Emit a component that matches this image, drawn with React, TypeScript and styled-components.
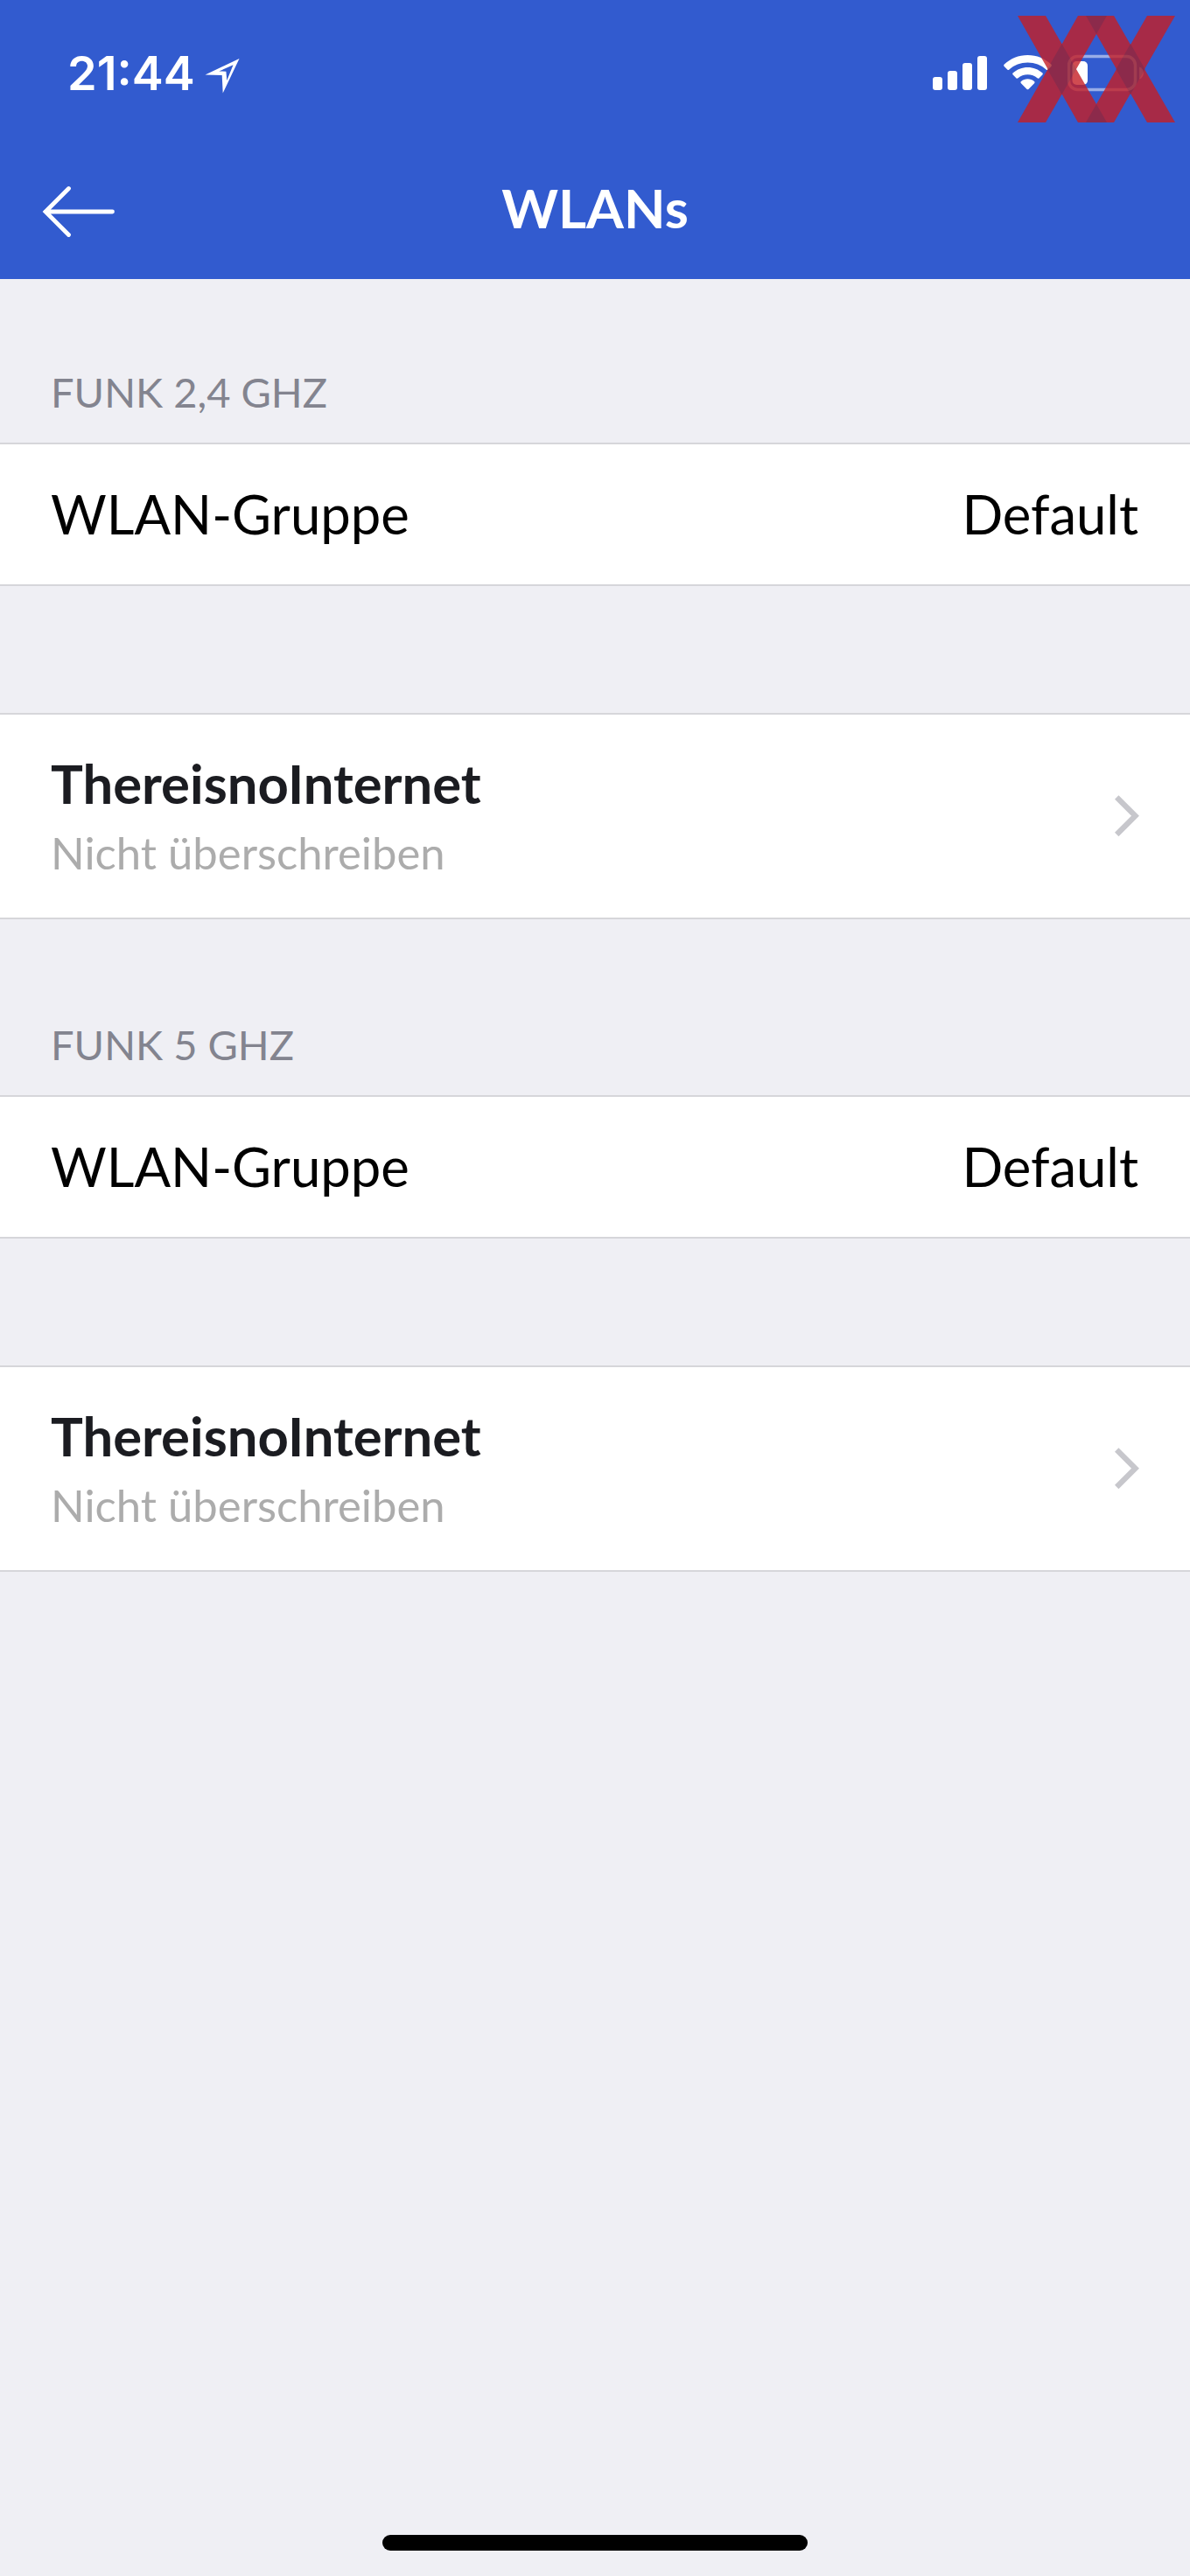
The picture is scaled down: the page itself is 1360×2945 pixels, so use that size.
import React from "react";
import styled, { createGlobalStyle } from "styled-components";

const GlobalStyle = createGlobalStyle`
  *, *::before, *::after { box-sizing: border-box; }
  body { margin: 0; background: #efeff4; }
`;

const Screen = styled.div`
  display: flex;
  flex-direction: column;
  width: 1360px;
  height: 2945px;
  background: #efeff4;
  font-family: Lato, sans-serif;
  position: relative;
`;

const Header = styled.header`
  display: flex;
  flex-direction: column;
  height: 319px;
  background: #325bcf;
  color: #fff;
`;

const StatusBar = styled.div`
  display: flex;
  justify-content: space-between;
  height: 160px;
  padding: 0 52px 0 77px;
`;

const Clock = styled.div`
  display: flex;
  align-items: center;
  height: 168px;
  font: 600 54px/168px Inter, sans-serif;
`;

const Time = styled.span`
  width: 157px;
`;

const StatusIcons = styled.div`
  display: flex;
  align-items: flex-start;
  gap: 18px;
  padding-top: 62px;
`;

const NavBar = styled.nav`
  display: grid;
  grid-template-columns: 200px 1fr 200px;
  align-items: center;
  height: 159px;
`;

const BackButton = styled.button`
  display: flex;
  padding: 4px 0 0 47px;
  border: 0;
  background: none;
  color: inherit;
`;

const Title = styled.h1`
  margin: 0;
  padding-bottom: 5px;
  font-size: 61.7px;
  font-weight: 700;
  line-height: 74px;
  text-align: center;
`;

const SectionLabel = styled.h2<{ $height: number }>`
  display: flex;
  align-items: flex-end;
  height: ${(p) => p.$height}px;
  margin: 0;
  padding: 0 58px 29px;
  color: #83848f;
  font-size: 47px;
  font-weight: 400;
  line-height: 58px;
`;

const Row = styled.div<{ $height: number }>`
  display: flex;
  align-items: center;
  justify-content: space-between;
  height: ${(p) => p.$height}px;
  padding: 0 58px;
  background: #fff;
  border: solid #d6d6da;
  border-width: 2px 0;
  color: #000;
  font-size: 61.6px;
  line-height: 74px;
`;

const Label = styled.span`
  padding-bottom: 2px;
`;

const Value = styled(Label)`
  padding-right: 1px;
`;

const Gap = styled.div`
  height: 145px;
`;

const Network = styled.div`
  display: flex;
  flex-direction: column;
  padding-top: 5px;
`;

const NetworkName = styled.span`
  color: #1b1c21;
  font-size: 61.6px;
  font-weight: 700;
  line-height: 78px;
`;

const NetworkNote = styled.span`
  color: #acacac;
  font-size: 50.8px;
  line-height: 82px;
`;

const HomeIndicator = styled.div`
  width: 486px;
  height: 18px;
  margin: auto auto 29px;
  border-radius: 9px;
  background: #000;
`;

const Watermark = styled.svg`
  position: absolute;
  top: 18px;
  left: 1162px;
`;

const LocationIcon = () => (
  <svg width="42" height="46" viewBox="0 0 42 46" fill="#fff" fillRule="evenodd">
    <path d="M39.500 6 .5 24.600 19.700 25.100 20.700 45.500ZM32.500 13.300 25.300 31 24.400 20.700 16.300 20.400Z" />
  </svg>
);

const SignalIcon = () => (
  <svg width="63" height="42" viewBox="0 0 63 42" fill="#fff">
    <rect x="0" y="26" width="11" height="15" rx="3" />
    <rect x="17" y="19" width="11" height="22" rx="3" />
    <rect x="34" y="10" width="11" height="31" rx="3" />
    <rect x="51" y="2" width="11" height="39" rx="3" />
  </svg>
);

const WifiIcon = () => (
  <svg width="55" height="42" viewBox="0 0 56 42" fill="#fff">
    <path d="M28 .7C17.5.7 7.8 4.800.8 11.400c-.8.8-.8 1.600-.1 2.400l3.600 3.700c.7.7 1.500.7 2.200 0C12.300 12.200 19.800 9.300 28 9.300s15.700 2.900 21.500 8.200c.7.700 1.500.700 2.200 0l3.600-3.700c.7-.8.7-1.600-.1-2.400C48.200 4.800 38.500.7 28 .7Z" />
    <path d="M28 14.800c-6.500 0-12.500 2.400-17 6.500-.8.7-.8 1.500-.1 2.300l3.700 3.700c.7.7 1.400.7 2.200.1 3-2.600 6.900-4.100 11.200-4.100s8.200 1.500 11.200 4.100c.8.6 1.500.6 2.200-.1l3.700-3.700c.7-.8.7-1.600-.1-2.300-4.500-4.100-10.500-6.500-17-6.500Z" />
    <path d="M28 28.500c-2.900 0-5.500 1-7.600 2.800-.8.700-.8 1.400-.1 2.200l6.500 6.600c.8.8 1.600.8 2.400 0l6.500-6.600c.7-.8.7-1.500-.1-2.200-2.100-1.800-4.700-2.800-7.600-2.800Z" />
  </svg>
);

const BatteryIcon = () => (
  <svg width="88" height="43" viewBox="0 0 88 43" fill="none">
    <rect x="1.500" y="2.500" width="76" height="38" rx="10" stroke="#fff" strokeOpacity=".5" strokeWidth="3.400" />
    <rect x="5.500" y="8" width="17.500" height="27" rx="5" fill="#fff" />
    <path d="M82 14.500c6.500 2 6.500 12 0 14Z" fill="#fff" fillOpacity=".5" />
  </svg>
);

const BackIcon = () => (
  <svg width="86" height="60" viewBox="0 0 86 60" fill="none" stroke="#fff" strokeWidth="4.800" strokeLinecap="round">
    <path d="M31.500 3.500 5 30 31.500 56.500M5 30H81.500" />
  </svg>
);

const Chevron = () => (
  <svg width="28" height="48" viewBox="0 0 28 48" fill="none" stroke="#c7c7cc" strokeWidth="6.300">
    <path d="M2.200 2.500 23.500 23.700 2.200 45" />
  </svg>
);

const Brand = () => (
  <Watermark width="182" height="123" viewBox="0 0 182 123">
    <g opacity=".8">
      <path fill="#c51f26" d="M1 0H33L103 122H70ZM70 0H103L33 122H1ZM79 0H111L181 122H149ZM149 0H181L111 122H79Z" />
      <path fill="#a31f2b" d="M79 0H103L91 21ZM79 122H103L91 101ZM51.500 32 68 61 51.500 90 35 61ZM130 32 146.500 61 130 90 113.500 61Z" />
    </g>
  </Watermark>
);

const bands = [
  { label: "FUNK 2,4 GHZ", offset: 187 },
  { label: "FUNK 5 GHZ", offset: 201 },
];

export default function App() {
  return (
    <Screen>
      <GlobalStyle />
      <Header>
        <StatusBar>
          <Clock>
            <Time>21:44</Time>
            <LocationIcon />
          </Clock>
          <StatusIcons>
            <SignalIcon />
            <WifiIcon />
            <BatteryIcon />
          </StatusIcons>
        </StatusBar>
        <NavBar>
          <BackButton aria-label="Zurück">
            <BackIcon />
          </BackButton>
          <Title>WLANs</Title>
        </NavBar>
      </Header>
      {bands.map((band) => (
        <React.Fragment key={band.label}>
          <SectionLabel $height={band.offset}>{band.label}</SectionLabel>
          <Row $height={164}>
            <Label>WLAN-Gruppe</Label>
            <Value>Default</Value>
          </Row>
          <Gap />
          <Row $height={236}>
            <Network>
              <NetworkName>ThereisnoInternet</NetworkName>
              <NetworkNote>Nicht überschreiben</NetworkNote>
            </Network>
            <Chevron />
          </Row>
        </React.Fragment>
      ))}
      <HomeIndicator />
      <Brand />
    </Screen>
  );
}
